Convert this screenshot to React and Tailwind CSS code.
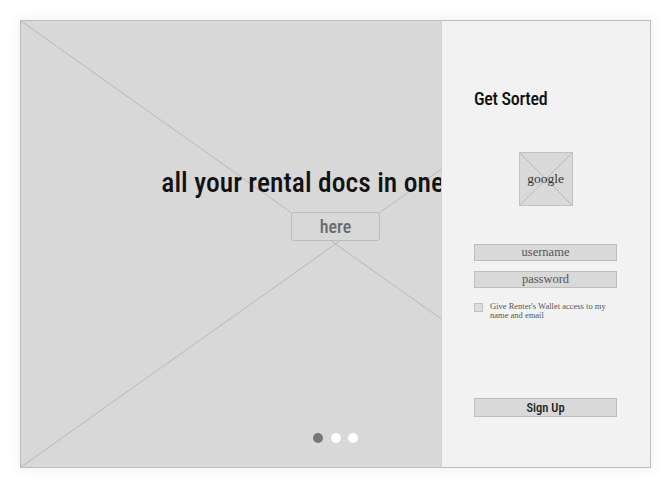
import React from 'react';

const CrossBox = ({ className }) => (
  <svg className={className} preserveAspectRatio="none" viewBox="0 0 100 100">
    <line x1="0" y1="0" x2="100" y2="100" stroke="#b8b8b8" strokeWidth="1" vectorEffect="non-scaling-stroke" />
    <line x1="0" y1="100" x2="100" y2="0" stroke="#b8b8b8" strokeWidth="1" vectorEffect="non-scaling-stroke" />
  </svg>
);

const Field = ({ label }) => (
  <div className="h-[17px] bg-[#d9d9d9] border border-[#bdbdbd] flex items-center justify-center text-[12.5px] text-[#555] font-['Liberation_Serif',serif]">
    {label}
  </div>
);

const SignUpPanel = () => (
  <div className="absolute top-0 right-0 bottom-0 w-[209px] bg-[#f2f2f2] border-l border-[#d0d0d0] pl-[32px] pr-[33px] pt-[69px] flex flex-col">
    <h2 className="font-['Roboto',sans-serif] [font-stretch:75%] font-medium text-[18px] leading-none tracking-[-0.3px] text-[#111]">Get Sorted</h2>

    <div className="relative self-center mt-[44px] w-[54px] h-[54px] bg-[#d9d9d9] border border-[#c2c2c2] flex items-center justify-center">
      <CrossBox className="absolute inset-0 w-full h-full" />
      <span className="relative text-[13.5px] text-[#333] font-['Liberation_Serif',serif]">google</span>
    </div>

    <div className="mt-[38px] flex flex-col gap-[10px]">
      <Field label="username" />
      <Field label="password" />
    </div>

    <label className="mt-[14px] flex items-start gap-[7px]">
      <span className="mt-[1px] w-[9px] h-[9px] shrink-0 bg-[#dcdcdc] border border-[#c0c0c0]" />
      <span className="text-[8.5px] leading-[9px] text-[#555] font-['Liberation_Serif',serif]">
        Give Renter's Wallet access to my name and email
      </span>
    </label>

    <button className="mt-[78px] h-[19px] bg-[#d9d9d9] border border-[#bdbdbd] font-['Roboto',sans-serif] [font-stretch:75%] font-medium text-[12.5px] text-[#222]">
      Sign Up
    </button>
  </div>
);

export default function App() {
  return (
    <div className="w-[670px] h-[488px] bg-white pt-[20px] pl-[20px]">
      <div className="relative w-[631px] h-[448px] bg-[#d8d8d8] border border-[#bcbcbc] shadow-[0_0_14px_rgba(0,0,0,0.08)] overflow-hidden">
        <CrossBox className="absolute inset-0 w-full h-full" />

        <div className="relative h-full flex flex-col items-center pt-[148px]">
          <h1 className="font-['Roboto',sans-serif] [font-stretch:75%] font-medium text-[27.5px] leading-none tracking-[0.05px] whitespace-nowrap text-[#111]">
            all your rental docs in one place
          </h1>
          <div className="mt-[15px] w-[89px] h-[29px] rounded-[3px] bg-[#d8d8d8] border border-[#bdbdbd] flex items-center justify-center font-['Roboto',sans-serif] [font-stretch:75%] font-medium text-[18px] text-[#6a6a6a]">
            here
          </div>
          <div className="mt-auto mb-[24px] flex gap-[7.5px]">
            <span className="w-[10px] h-[10px] rounded-full bg-[#777]" />
            <span className="w-[10px] h-[10px] rounded-full bg-white" />
            <span className="w-[10px] h-[10px] rounded-full bg-white" />
          </div>
        </div>

        <SignUpPanel />
      </div>
    </div>
  );
}
